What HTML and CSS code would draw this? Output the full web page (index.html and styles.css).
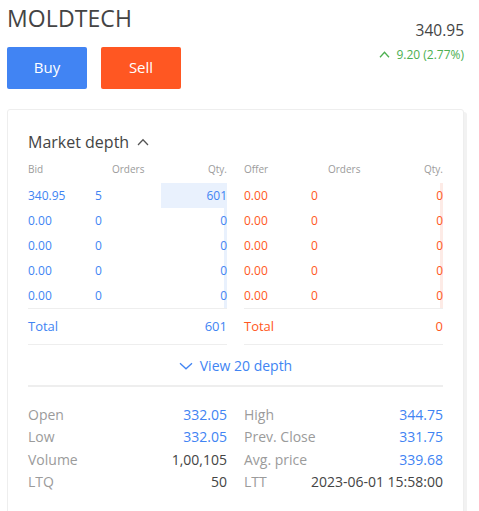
FILE: index.html
```html
<!DOCTYPE html>
<html>
<head>
<meta charset="utf-8">
<link rel="stylesheet" href="styles.css">
</head>
<body>
<div class="page">
  <header class="top">
    <div class="instrument">
      <h1 class="title">MOLDTECH</h1>
      <div class="actions">
        <button class="btn buy">Buy</button>
        <button class="btn sell">Sell</button>
      </div>
    </div>
    <div class="quote">
      <div class="ltp">340.95</div>
      <div class="change">
        <svg class="chev-up-sm" width="11" height="7" viewBox="0 0 11 7"><path d="M1 6.2 L5.5 1.3 L10 6.2" fill="none" stroke="currentColor" stroke-width="1.3"/></svg>
        <span>9.20 (2.77%)</span>
      </div>
    </div>
  </header>

  <section class="card">
    <h2 class="card-title">Market depth
      <svg class="chev-up" width="12" height="8" viewBox="0 0 12 8"><path d="M1 7 L6 1.8 L11 7" fill="none" stroke="#555" stroke-width="1.3"/></svg>
    </h2>

    <div class="depth">
      <div class="side bid">
        <div class="head"><span>Bid</span><span>Orders</span><span class="r">Qty.</span></div>
        <div class="rows">
          <div class="row"><span class="bar" style="width:66px"></span><span>340.95</span><span>5</span><span class="r">601</span></div>
          <div class="row"><span class="bar" style="width:3px"></span><span>0.00</span><span>0</span><span class="r">0</span></div>
          <div class="row"><span class="bar" style="width:3px"></span><span>0.00</span><span>0</span><span class="r">0</span></div>
          <div class="row"><span class="bar" style="width:3px"></span><span>0.00</span><span>0</span><span class="r">0</span></div>
          <div class="row"><span class="bar" style="width:3px"></span><span>0.00</span><span>0</span><span class="r">0</span></div>
        </div>
        <div class="total"><span>Total</span><span>601</span></div>
      </div>
      <div class="side offer">
        <div class="head"><span>Offer</span><span>Orders</span><span class="r">Qty.</span></div>
        <div class="rows">
          <div class="row"><span class="bar" style="width:3px"></span><span>0.00</span><span>0</span><span class="r">0</span></div>
          <div class="row"><span class="bar" style="width:3px"></span><span>0.00</span><span>0</span><span class="r">0</span></div>
          <div class="row"><span class="bar" style="width:3px"></span><span>0.00</span><span>0</span><span class="r">0</span></div>
          <div class="row"><span class="bar" style="width:3px"></span><span>0.00</span><span>0</span><span class="r">0</span></div>
          <div class="row"><span class="bar" style="width:3px"></span><span>0.00</span><span>0</span><span class="r">0</span></div>
        </div>
        <div class="total"><span>Total</span><span>0</span></div>
      </div>
    </div>

    <div class="more">
      <svg class="chev-down" width="14" height="8" viewBox="0 0 14 8"><path d="M1 1.2 L7 6.8 L13 1.2" fill="none" stroke="currentColor" stroke-width="1.3"/></svg>
      <span>View 20 depth</span>
    </div>

    <div class="stats">
      <div class="col">
        <div class="stat"><span class="label">Open</span><span class="value blue">332.05</span></div>
        <div class="stat"><span class="label">Low</span><span class="value blue">332.05</span></div>
        <div class="stat"><span class="label">Volume</span><span class="value">1,00,105</span></div>
        <div class="stat"><span class="label">LTQ</span><span class="value">50</span></div>
      </div>
      <div class="col">
        <div class="stat"><span class="label">High</span><span class="value blue">344.75</span></div>
        <div class="stat"><span class="label">Prev. Close</span><span class="value blue">331.75</span></div>
        <div class="stat"><span class="label">Avg. price</span><span class="value blue">339.68</span></div>
        <div class="stat"><span class="label">LTT</span><span class="value">2023-06-01 15:58:00</span></div>
      </div>
    </div>
  </section>
</div>
</body>
</html>
```

FILE: styles.css
```css
* { box-sizing: border-box; }
html, body { margin: 0; padding: 0; background: #fff; }
body {
  font-family: "Open Sans", "Noto Sans", sans-serif;
  color: #444;
  overflow: hidden;
}
.page {
  padding: 0 15px 0 7px;
}
.top {
  display: flex;
  justify-content: space-between;
  align-items: flex-start;
}
.title {
  margin: 3px 0 0;
  font-size: 23px;
  font-weight: 400;
  line-height: 30px;
  color: #444;
  letter-spacing: 0.1px;
}
.actions {
  display: flex;
  gap: 14px;
  margin-top: 14px;
}
.btn {
  width: 80px;
  height: 42px;
  border: 0;
  border-radius: 2px;
  color: #fff;
  font-family: "Open Sans", sans-serif;
  font-size: 15px;
  padding: 0 0 2px;
  line-height: 40px;
}
.buy { background: #4184f3; }
.sell { background: #ff5722; }

.quote {
  margin-top: 20px;
  text-align: right;
}
.ltp {
  font-size: 15.5px;
  line-height: 20px;
  color: #444;
}
.change {
  margin-top: 7px;
  font-size: 12px;
  line-height: 16px;
  color: #4caf50;
  display: flex;
  align-items: center;
  justify-content: flex-end;
  gap: 6px;
}
.chev-up-sm { display: block; margin-top: -1px; }

.card {
  margin-top: 20px;
  border: 1px solid #eee;
  border-radius: 3px;
  box-shadow: 3px 3px 0 #f2f2f2;
  padding: 21px 20px 20px;
}
.card-title {
  margin: 0;
  font-size: 16px;
  font-weight: 400;
  line-height: 22px;
  color: #444;
  display: flex;
  align-items: center;
  gap: 8px;
}
.chev-up { display: block; margin-top: 0px; }

.depth {
  display: grid;
  grid-template-columns: 1fr 1fr;
  column-gap: 17px;
  margin-top: 9px;
}
.head {
  display: grid;
  grid-template-columns: 84px 1fr auto;
  font-size: 10px;
  line-height: 14px;
  color: #9b9b9b;
  margin-bottom: 7px;
}
.r { text-align: right; }
.rows {
  border-bottom: 1px solid #eee;
}
.row {
  position: relative;
  display: grid;
  grid-template-columns: 67px 1fr auto;
  font-size: 12px;
  line-height: 25px;
  height: 25px;
}
.row > span { position: relative; }
.row > .bar {
  position: absolute;
  top: 0;
  right: 0;
  height: 25px;
}
.bid .row, .bid .total { color: #4184f3; }
.offer .row, .offer .total { color: #ff5722; }
.bid .bar { background: #e9f1fd; }
.offer .bar { background: #fdebe6; }
.total {
  display: flex;
  justify-content: space-between;
  font-size: 13px;
  line-height: 35px;
  border-bottom: 1px solid #eee;
}
.more {
  display: flex;
  align-items: center;
  justify-content: center;
  gap: 7px;
  height: 42px;
  font-size: 14px;
  color: #4184f3;
  border-bottom: 2px solid #eee;
}
.chev-down { display: block; margin-top: 1px; }

.stats {
  display: grid;
  grid-template-columns: 1fr 1fr;
  column-gap: 17px;
  padding-top: 17px;
}
.stat {
  display: flex;
  justify-content: space-between;
  font-size: 14px;
  line-height: 22.3px;
}
.label { color: #9b9b9b; }
.value { color: #444; }
.value.blue { color: #4184f3; }
```
